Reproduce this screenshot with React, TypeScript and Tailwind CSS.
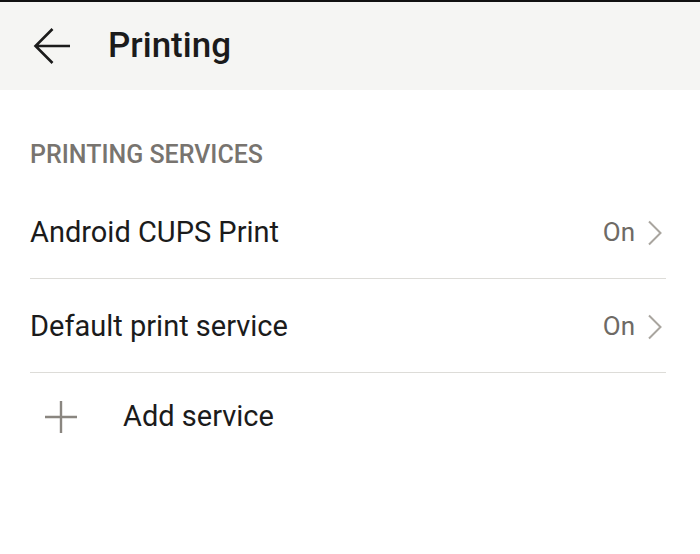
import React from 'react';

const font = { fontFamily: 'Roboto, "Noto Sans", sans-serif' };

const Chevron = () => (
  <svg width="16" height="26" viewBox="0 0 16 26" fill="none">
    <path d="M2 1.5 L13.5 13 L2 24.5" stroke="#a9a59f" strokeWidth="2" />
  </svg>
);

const ServiceRow = ({ name, value }: { name: string; value: string }) => (
  <div className="flex items-center h-[94px] pt-[2px] border-b border-[#dddcd8]">
    <span className="flex-1 text-[29px] text-[#1b1b1b]">{name}</span>
    <span className="text-[26px] text-[#6e6a65] mr-[12px]">{value}</span>
    <span className="mr-[3px]">
      <Chevron />
    </span>
  </div>
);

const App = () => {
  return (
    <div className="w-[700px] h-[554px] bg-white overflow-hidden" style={font}>
      <div className="h-[90px] bg-[#f5f5f3] border-t-2 border-[#111] flex items-center">
        <svg className="ml-[33px]" width="38" height="38" viewBox="0 0 38 38" fill="none">
          <path d="M37 19 H2.5 M19.5 2 L2.5 19 L19.5 36" stroke="#1b1b1b" strokeWidth="2.6" />
        </svg>
        <h1 className="ml-[37px] text-[35px] font-medium text-[#1b1b1b]">Printing</h1>
      </div>

      <div className="pl-[30px] pr-[34px]">
        <div className="h-[95px] pt-[51px] text-[25px] leading-[28px] font-medium text-[#78746f]">
          PRINTING SERVICES
        </div>
        <ServiceRow name="Android CUPS Print" value="On" />
        <ServiceRow name="Default print service" value="On" />
        <div className="flex items-center h-[88px]">
          <svg className="ml-[14px]" width="34" height="34" viewBox="0 0 34 34" fill="none">
            <path d="M17 1 V33 M1 17 H33" stroke="#8a8680" strokeWidth="2.4" />
          </svg>
          <span className="ml-[45px] text-[29px] text-[#1b1b1b]">Add service</span>
        </div>
      </div>
    </div>
  );
};

export default App;
